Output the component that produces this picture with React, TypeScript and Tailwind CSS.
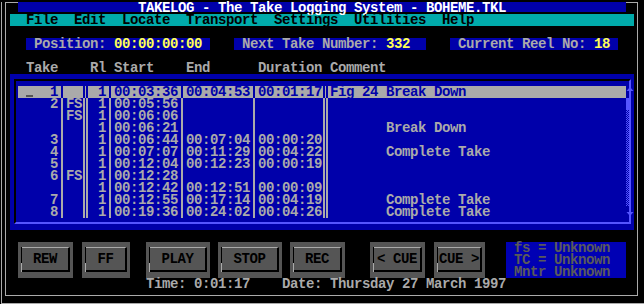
type Row = {
  take: string;
  fs?: string;
  start: string;
  end?: string;
  dur?: string;
  note?: string;
  hl?: boolean;
  bar: 'up' | 'thumb' | 'hatch' | 'down';
};

const rows: Row[] = [
  { take: '1', start: '00:03:36', end: '00:04:53', dur: '00:01:17', note: 'Fig 24 Break Down', hl: true, bar: 'up' },
  { take: '2', fs: 'FS', start: '00:05:56', bar: 'thumb' },
  { take: '', fs: 'FS', start: '00:06:06', bar: 'hatch' },
  { take: '', start: '00:06:21', note: '       Break Down', bar: 'hatch' },
  { take: '3', start: '00:06:44', end: '00:07:04', dur: '00:00:20', bar: 'hatch' },
  { take: '4', start: '00:07:07', end: '00:11:29', dur: '00:04:22', note: '       Complete Take', bar: 'hatch' },
  { take: '5', start: '00:12:04', end: '00:12:23', dur: '00:00:19', bar: 'hatch' },
  { take: '6', fs: 'FS', start: '00:12:28', bar: 'hatch' },
  { take: '', start: '00:12:42', end: '00:12:51', dur: '00:00:09', bar: 'hatch' },
  { take: '7', start: '00:12:55', end: '00:17:14', dur: '00:04:19', note: '       Complete Take', bar: 'hatch' },
  { take: '8', start: '00:19:36', end: '00:24:02', dur: '00:04:26', note: '       Complete Take', bar: 'down' },
];

const Sep = ({ hl }: { hl?: boolean }) => (
  <div className="w-[8px] h-[12px] pl-[3px]">
    <div className={hl ? 'w-[2px] h-full bg-[#0000aa]' : 'w-[2px] h-full bg-[#aaaaaa]'} />
  </div>
);

const DblSep = ({ hl }: { hl?: boolean }) => (
  <div className="w-[8px] h-[12px] pl-[1px] flex gap-[1px]">
    <div className={hl ? 'w-[2px] h-full bg-[#0000aa]' : 'w-[2px] h-full bg-[#aaaaaa]'} />
    <div className={hl ? 'w-[2px] h-full bg-[#0000aa]' : 'w-[2px] h-full bg-[#aaaaaa]'} />
  </div>
);

const ScrollCell = ({ kind }: { kind: Row['bar'] }) => {
  if (kind === 'thumb') return <div className="w-[8px] h-[12px] bg-[#5555ff]" />;
  if (kind === 'hatch')
    return (
      <div className="w-[8px] h-[12px] bg-[repeating-conic-gradient(#5555ff_0_25%,#0000aa_0_50%)] bg-[length:2px_2px]" />
    );
  return (
    <div className="w-[8px] h-[12px]">
      {kind === 'up' ? (
        <svg width="8" height="12" viewBox="0 0 8 12">
          <polygon points="4,1 7.5,5 0.5,5" fill="#5555ff" />
          <rect x="3" y="4" width="2" height="6" fill="#5555ff" />
        </svg>
      ) : (
        <svg width="8" height="12" viewBox="0 0 8 12">
          <rect x="3" y="1" width="2" height="6" fill="#5555ff" />
          <polygon points="0.5,6 7.5,6 4,10" fill="#5555ff" />
        </svg>
      )}
    </div>
  );
};

const DataRow = ({ r }: { r: Row }) => (
  <div className="flex h-[12px]">
    <div className={r.hl ? 'flex h-[12px] bg-[#aaaaaa] text-[#0000aa]' : 'flex h-[12px]'}>
      <div className="w-[40px] h-[12px] flex">
        <div className="w-[8px]" />
        <div className="w-[8px] h-[12px] pt-[9px]">
          {r.hl && <div className="w-[7px] h-[2px] bg-[#555555]" />}
        </div>
        <div className="flex-1 text-right">{r.take}</div>
      </div>
      <Sep hl={r.hl} />
      <div className="w-[16px]">{r.fs}</div>
      <DblSep hl={r.hl} />
      <div className="w-[16px] text-right">1</div>
      <Sep hl={r.hl} />
      <div className="w-[64px]">{r.start}</div>
      <Sep hl={r.hl} />
      <div className="w-[64px]">{r.end}</div>
      <Sep hl={r.hl} />
      <div className="w-[64px]">{r.dur}</div>
      <DblSep hl={r.hl} />
      <div className="w-[296px] whitespace-pre">{r.note}</div>
    </div>
    <ScrollCell kind={r.bar} />
  </div>
);

const Btn = ({ label, cls }: { label: string; cls: string }) => (
  <div className={`${cls} h-[36px] bg-[#555555] px-[3px] pt-[5px] pb-[6px]`}>
    <div className="flex h-full">
      <div className="w-[1px] h-full bg-[linear-gradient(to_bottom,#000000_0_65%,#aaaaaa_65%)]" />
      <div className="flex-1 flex items-center justify-center whitespace-pre text-black border-t border-t-[#aaaaaa] border-r-2 border-r-black border-b-2 border-b-black">
        {label}
      </div>
    </div>
  </div>
);

export default function App() {
  return (
    <div className="w-[644px] h-[304px] bg-black overflow-hidden font-['Liberation_Mono',monospace] font-bold text-[14px] tracking-[-0.4px] leading-[12px] text-[#aaaaaa]">
      <div className="ml-[1px] h-[302px] border-l border-b border-[#aaaaaa]">
        <div className="ml-[3px] mt-[2px] w-[633px] h-[294px] border border-[#aaaaaa]">
          <div className="-ml-[4px] -mt-[1px]">
            {/* title */}
            <div className="h-[12px] pl-[16px]">
              <div className="w-[608px] h-[10px] bg-[#0000aa] text-white whitespace-pre">
                {'               TAKELOG - The Take Logging System - BOHEME.TKL'}
              </div>
            </div>

            {/* menu */}
            <div className="h-[12px] pl-[8px]">
              <div className="w-[624px] h-[12px] bg-[#00aaaa] text-black whitespace-pre">
                {'  File  Edit  Locate  Transport  Settings  Utilities  Help'}
              </div>
            </div>

            <div className="h-[12px]" />

            {/* counters */}
            <div className="h-[12px] pl-[24px] flex whitespace-pre">
              <div className="w-[184px] h-[12px] bg-[#0000aa]">
                {' Position: '}
                <span className="text-[#ffff55]">00:00:00:00</span>
              </div>
              <div className="ml-[24px] w-[192px] h-[12px] bg-[#0000aa]">
                {' Next Take Number: '}
                <span className="text-[#ffff55]">332</span>
              </div>
              <div className="ml-[24px] w-[168px] h-[12px] bg-[#0000aa]">
                {' Current Reel No: '}
                <span className="text-[#ffff55]">18</span>
              </div>
            </div>

            <div className="h-[12px]" />

            {/* column headings */}
            <div className="h-[12px] whitespace-pre">
              {'   Take    Rl Start    End      Duration Comment'}
            </div>

            {/* take list */}
            <div className="ml-[8px] w-[624px] h-[156px] bg-[#0000aa] pl-[4px] pt-[5px]">
              <div className="w-[617px] h-[145px] border-2 border-t-black border-l-black border-r-[#5555ff] border-b-[#5555ff] pt-[5px] pl-[2px]">
                {rows.map((r, i) => (
                  <DataRow key={i} r={r} />
                ))}
              </div>
            </div>

            <div className="h-[12px]" />

            {/* transport */}
            <div className="h-[36px] flex pl-[16px]">
              <Btn label="REW" cls="w-[55px]" />
              <Btn label="FF" cls="ml-[9px] w-[48px]" />
              <Btn label="PLAY" cls="ml-[16px] w-[64px]" />
              <Btn label="STOP" cls="ml-[8px] w-[64px]" />
              <Btn label="REC" cls="ml-[8px] w-[55px]" />
              <Btn label="< CUE" cls="ml-[25px] w-[55px]" />
              <Btn label="CUE >" cls="ml-[9px] w-[51px]" />
              <div className="ml-[21px] w-[120px] h-[36px] bg-[#0000b4] text-[#5a5a5a] pl-[8px] whitespace-pre">
                <div className="h-[12px]">fs = Unknown</div>
                <div className="h-[12px]">TC = Unknown</div>
                <div className="h-[12px]">Mntr Unknown</div>
              </div>
            </div>

            <div className="h-[12px] whitespace-pre">
              {'                  Time: 0:01:17    Date: Thursday 27 March 1997'}
            </div>
          </div>
        </div>
      </div>
    </div>
  );
}
